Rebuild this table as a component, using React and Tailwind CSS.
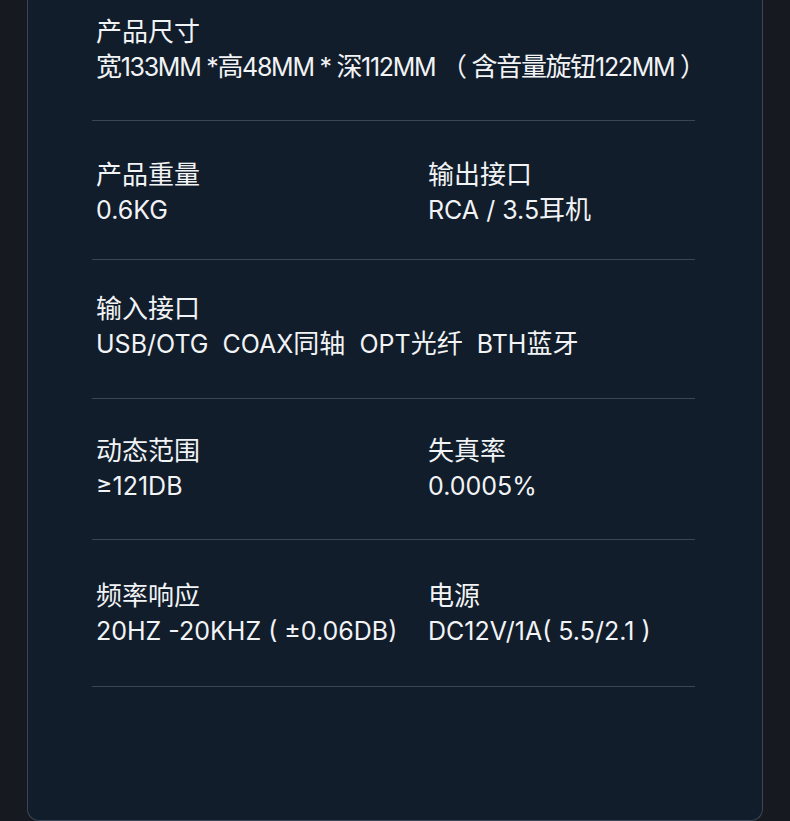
const rows = [
  { pad: 'pt-[15px] pb-[35px]', tight: true, items: [{ label: '产品尺寸', value: '宽133MM *高48MM * 深112MM （ 含音量旋钮122MM ）' }] },
  { pad: 'pt-[37px] pb-[31px]', items: [{ label: '产品重量', value: '0.6KG' }, { label: '输出接口', value: 'RCA / 3.5耳机' }] },
  { pad: 'pt-[32px] pb-[36px]', items: [{ label: '输入接口', value: 'USB/OTG  COAX同轴  OPT光纤  BTH蓝牙' }] },
  { pad: 'pt-[35px] pb-[35px]', items: [{ label: '动态范围', value: '≥121DB' }, { label: '失真率', value: '0.0005%' }] },
  { pad: 'pt-[39px] pb-[37px]', items: [{ label: '频率响应', value: '20HZ -20KHZ ( ±0.06DB)' }, { label: '电源', value: 'DC12V/1A( 5.5/2.1 )' }] },
]

// Chinese runs sit a touch larger than the latin text in the design
function Mixed({ text }) {
  return text.split(/([\u3000-\u9fff\uff00-\uffef]+)/).map((part, i) =>
    /[\u3000-\u9fff\uff00-\uffef]/.test(part) ? (
      <span key={i} className="text-[26px] leading-none" style={{ fontFamily: '"Noto Sans CJK SC", sans-serif' }}>{part}</span>
    ) : (
      part
    )
  )
}

export default function App() {
  return (
    <div className="w-[790px] h-[821px] overflow-hidden bg-[#16191f] px-[27px]" style={{ fontFamily: 'Inter, "Noto Sans CJK SC", sans-serif' }}>
      <div className="h-[821px] bg-[#111d2b] border-x border-b border-[#3b4757] rounded-b-[12px] pl-[64px] pr-[67px]">
        {rows.map((row, i) => (
          <div key={i} className={`border-b border-[#3a4555] ${row.pad}`}>
            <div className="flex pl-1 text-[25px] leading-[35px] text-[#f2f3f5]">
              {row.items.map((it, j) => (
                <div key={j} className={row.items.length > 1 && j === 0 ? 'w-[332px]' : ''}>
                  <div className="h-[35px]"><Mixed text={it.label} /></div>
                  <div className={row.tight ? 'h-[35px] whitespace-pre tracking-[-1.3px]' : 'h-[35px] whitespace-pre'}>
                    <Mixed text={it.value} />
                  </div>
                </div>
              ))}
            </div>
          </div>
        ))}
      </div>
    </div>
  )
}
